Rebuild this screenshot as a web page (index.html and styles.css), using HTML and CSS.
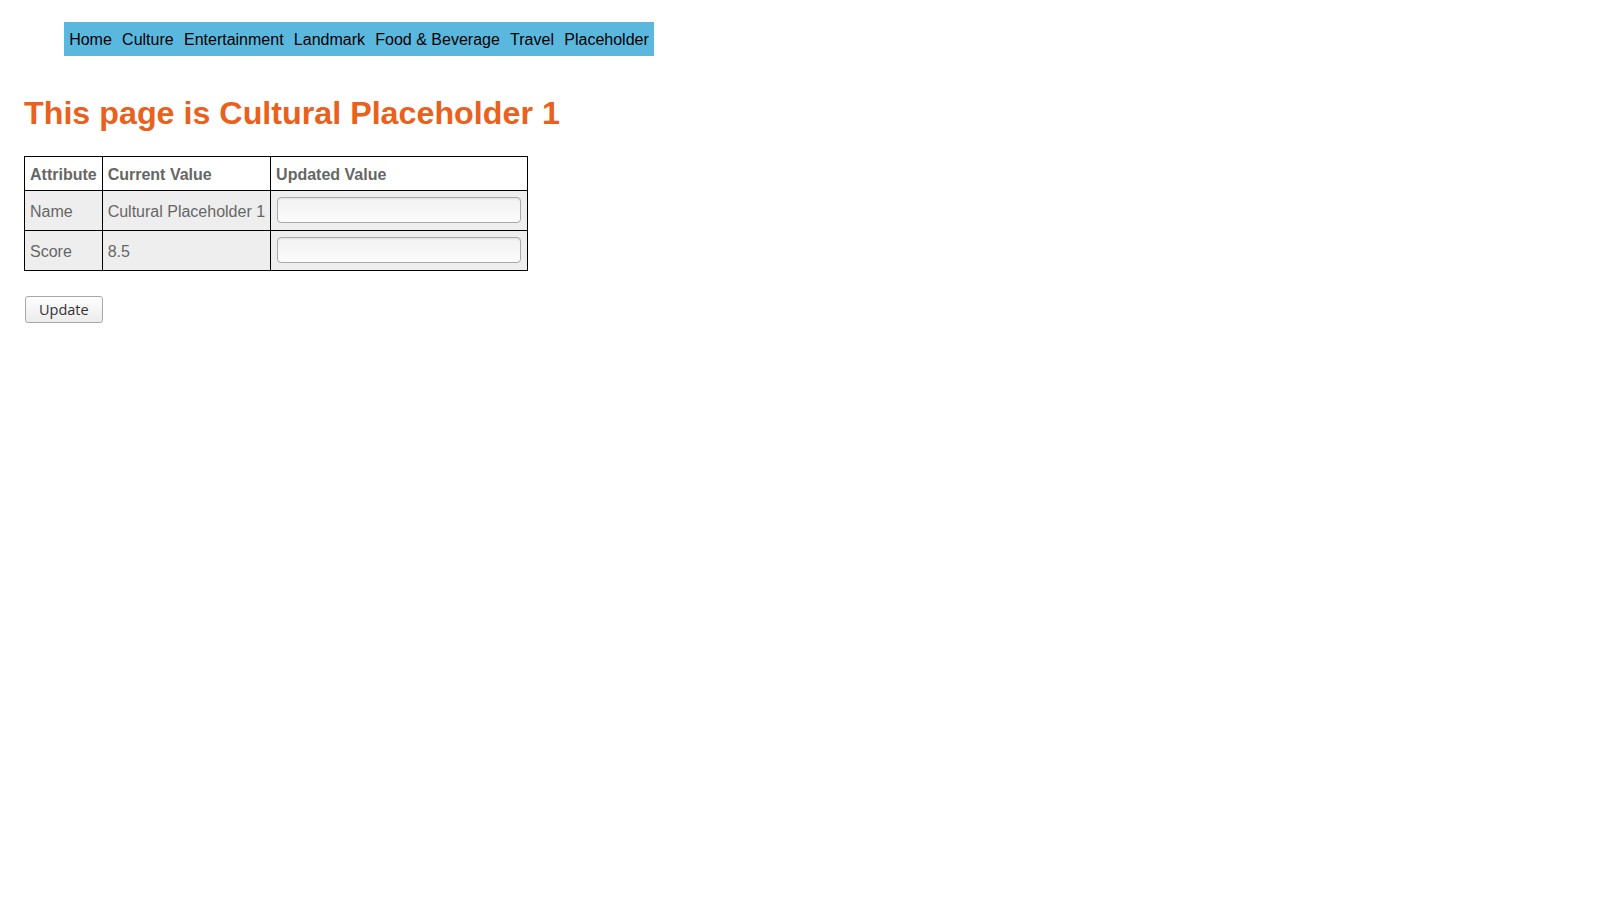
FILE: index.html
```html
<!DOCTYPE html>
<html lang="en">
<head>
<meta charset="utf-8">
<title>Cultural Placeholder 1</title>
<link rel="stylesheet" href="styles.css">
</head>
<body>
<div class="page">
  <nav class="topnav">
    <a href="#" class="nav-link">Home</a>
    <a href="#" class="nav-link">Culture</a>
    <a href="#" class="nav-link">Entertainment</a>
    <a href="#" class="nav-link">Landmark</a>
    <a href="#" class="nav-link">Food &amp; Beverage</a>
    <a href="#" class="nav-link">Travel</a>
    <a href="#" class="nav-link">Placeholder</a>
  </nav>
  <h1 class="title">This page is Cultural Placeholder 1</h1>
  <form class="edit-form">
    <table class="attr-table">
      <thead>
        <tr><th>Attribute</th><th>Current Value</th><th>Updated Value</th></tr>
      </thead>
      <tbody>
        <tr><td>Name</td><td>Cultural Placeholder 1</td><td><input type="text" class="field"></td></tr>
        <tr><td>Score</td><td>8.5</td><td><input type="text" class="field"></td></tr>
      </tbody>
    </table>
    <button type="button" class="btn">Update</button>
  </form>
</div>
</body>
</html>
```

FILE: styles.css
```css
html, body {
  margin: 0;
  padding: 0;
  background: #ffffff;
}

.page {
  padding: 22px 24px 0 24px;
  font-family: "Liberation Sans", Arial, sans-serif;
  font-size: 16px;
}

.topnav {
  display: flex;
  width: fit-content;
  margin-left: 40px;
  background: #5ab8df;
}

.nav-link {
  display: block;
  padding: 9px 5.15px 7px 5.15px;
  line-height: 18px;
  color: #000;
  text-decoration: none;
  white-space: nowrap;
}

.title {
  margin: 39px 0 24px 0;
  font-size: 32.25px;
  line-height: 37px;
  font-weight: bold;
  color: #e9611c;
}

.edit-form {
  margin: 0;
}

.attr-table {
  border-collapse: collapse;
  border: 1px solid #000;
  color: #666;
}

.attr-table th,
.attr-table td {
  border: 1px solid #000;
  padding: 6px 5px 4px 5px;
  line-height: 23px;
  text-align: left;
  vertical-align: middle;
  white-space: nowrap;
}

.attr-table th {
  font-weight: bold;
  background: #fff;
}

.attr-table td {
  background: #eeeeee;
}

.field {
  display: block;
  box-sizing: border-box;
  width: 244px;
  height: 26px;
  margin: 0 1px 3px 1px;
  border: 1px solid #a9a9a9;
  border-radius: 4px;
  background: linear-gradient(#f1f1f1, #fcfcfc);
  box-shadow: inset 0 1px 1px rgba(0, 0, 0, 0.06);
}

.btn {
  display: block;
  margin: 25px 0 0 1px;
  padding: 4px 13px 3px 13px;
  border: 1px solid #a8a8a8;
  border-radius: 3px;
  background: linear-gradient(#fdfdfd, #ececec);
  font-family: "Open Sans", "Noto Sans", sans-serif;
  font-size: 14.5px;
  line-height: 18px;
  color: #333;
}
```
